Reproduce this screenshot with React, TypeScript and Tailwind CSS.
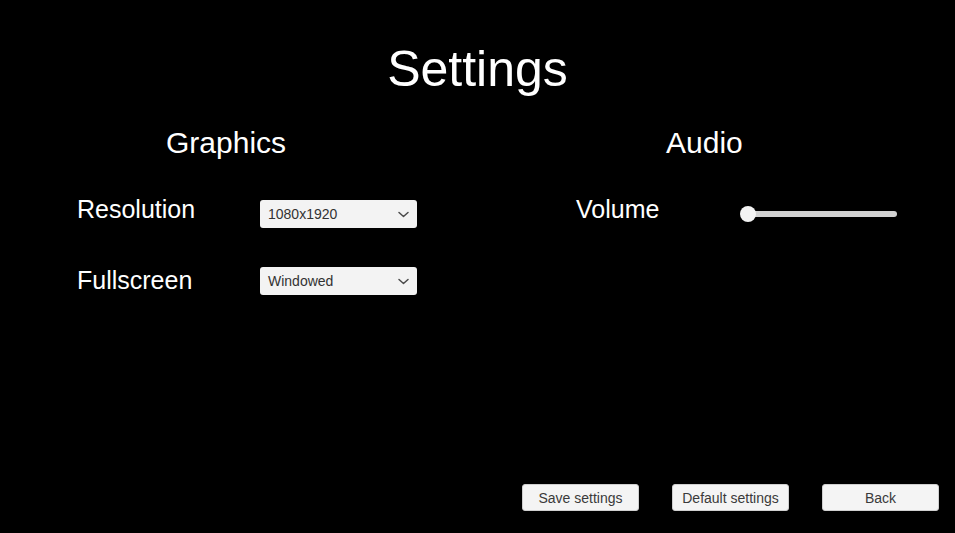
import React from "react";

function Chevron() {
  return (
    <svg width="13" height="8" viewBox="0 0 13 8" className="absolute left-[137px] top-[11px]">
      <polyline points="2,1.5 6.5,5.5 11,1.5" fill="none" stroke="#4a4a4a" strokeWidth="1.5" strokeLinecap="round" strokeLinejoin="round" />
    </svg>
  );
}

function Dropdown({ value, className }: { value: string; className?: string }) {
  return (
    <div className={"relative flex h-[28px] w-[157px] items-center rounded-[3px] bg-[#f3f3f3] pl-[8px] text-[14px] leading-none text-[#323232] " + (className ?? "")}>
      <span>{value}</span>
      <Chevron />
    </div>
  );
}

function Button({ label }: { label: string }) {
  return (
    <div className="flex h-[27px] w-[117px] items-center justify-center rounded-[3px] border border-[#cfcfcf] bg-[#f4f4f4] text-[14px] leading-none text-[#3a3a3a]">
      {label}
    </div>
  );
}

export default function App() {
  return (
    <div
      className="flex h-[533px] w-[955px] flex-col overflow-hidden bg-black text-white"
      style={{ fontFamily: '"Liberation Sans", Arial, sans-serif' }}
    >
      <div className="mt-[44px] text-center text-[50px] leading-none">Settings</div>

      <div className="mt-[34px] flex">
        {/* Graphics column */}
        <div className="w-[499px]">
          <div className="pl-[166px] text-[30px] leading-none">Graphics</div>
          <div className="mt-[39px] flex items-start pl-[77px]">
            <div className="w-[183px] text-[25px] leading-none">Resolution</div>
            <Dropdown value="1080x1920" className="mt-[3px]" />
          </div>
          <div className="mt-[39px] flex items-start pl-[77px]">
            <div className="mt-[1px] w-[183px] text-[25px] leading-none">Fullscreen</div>
            <Dropdown value="Windowed" />
          </div>
        </div>

        {/* Audio column */}
        <div className="flex-1">
          <div className="pl-[167px] text-[30px] leading-none">Audio</div>
          <div className="mt-[39px] flex items-start pl-[77px]">
            <div className="w-[163px] text-[25px] leading-none">Volume</div>
            <div className="relative mt-[9px] h-[16px] w-[158px]">
              <div className="absolute left-[8px] right-0 top-[5px] h-[6px] rounded-full bg-[#d2d2d2]" />
              <div className="absolute left-[1px] top-0 h-[16px] w-[16px] rounded-full bg-[#f3f3f3]" />
            </div>
          </div>
        </div>
      </div>

      <div className="mt-auto flex justify-end gap-[33px] pb-[22px] pr-[16px]">
        <Button label="Save settings" />
        <Button label="Default settings" />
        <Button label="Back" />
      </div>
    </div>
  );
}
